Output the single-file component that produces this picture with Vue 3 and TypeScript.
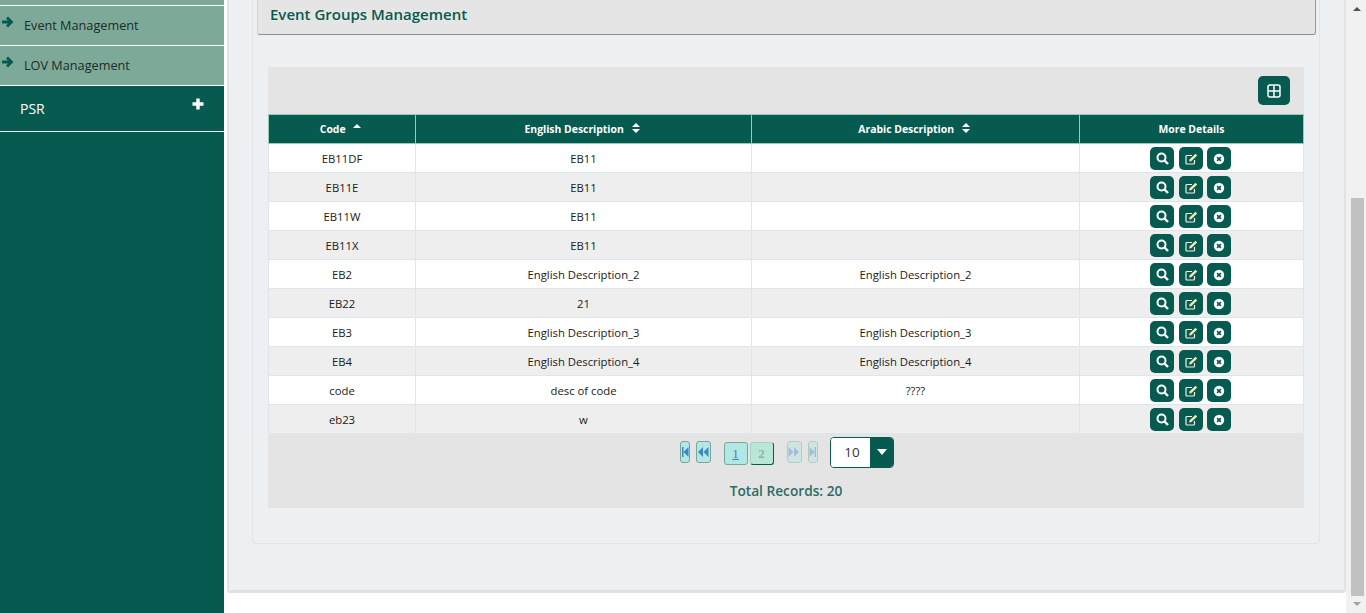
<template>
  <div class="page">
    <aside class="sidebar">
      <div class="menu-sliver"></div>
      <div v-for="item in subMenu" :key="item" class="sub-item">
        <svg class="arrow" viewBox="0 0 12 12" width="12" height="12">
          <path d="M0 6h9M5 1.500 9.500 6 5 10.500" fill="none" stroke="#075a50" stroke-width="2.800" />
        </svg>
        <span>{{ item }}</span>
      </div>
      <div class="psr-item">
        <span>PSR</span>
        <svg class="plus" viewBox="0 0 12 12" width="12" height="12">
          <path d="M6 .5v11M.5 6h11" stroke="#fff" stroke-width="3.4" fill="none" />
        </svg>
      </div>
    </aside>

    <main class="main">
      <div class="panel">
        <div class="card">
          <div class="panel-title">Event Groups Management</div>
          <div class="datatable">
            <div class="toolbar">
              <button class="btn add-btn" aria-label="Add">
                <svg viewBox="0 0 14 14" width="14" height="14">
                  <rect x="1" y="1" width="12" height="12" rx="2" fill="none" stroke="#fff" stroke-width="1.500" />
                  <path d="M7 1v12M1 7h12" stroke="#fff" stroke-width="1.500" />
                </svg>
              </button>
            </div>
            <table>
              <colgroup>
                <col style="width: 147px" />
                <col style="width: 336px" />
                <col style="width: 328px" />
                <col />
              </colgroup>
              <thead>
                <tr>
                  <th>
                    Code
                    <svg class="sort" viewBox="0 0 8 10" width="8" height="10">
                      <path d="M4 1 8 5H0z" fill="#fff" />
                    </svg>
                  </th>
                  <th>
                    English Description
                    <svg class="sort" viewBox="0 0 8 10" width="8" height="10">
                      <path d="M4 0 8 4H0zM4 10 0 6h8z" fill="#fff" />
                    </svg>
                  </th>
                  <th>
                    Arabic Description
                    <svg class="sort" viewBox="0 0 8 10" width="8" height="10">
                      <path d="M4 0 8 4H0zM4 10 0 6h8z" fill="#fff" />
                    </svg>
                  </th>
                  <th>More Details</th>
                </tr>
              </thead>
              <tbody>
                <tr v-for="row in rows" :key="row.code">
                  <td>{{ row.code }}</td>
                  <td>{{ row.english }}</td>
                  <td>{{ row.arabic }}</td>
                  <td>
                    <div class="actions">
                      <button class="btn icon-btn" aria-label="View">
                        <svg viewBox="0 0 13 13" width="13" height="13">
                          <circle cx="5.500" cy="5.500" r="4" fill="none" stroke="#fff" stroke-width="2" />
                          <path d="M8.500 8.500 12 12" stroke="#fff" stroke-width="2.400" />
                        </svg>
                      </button>
                      <button class="btn icon-btn" aria-label="Edit">
                        <svg viewBox="0 0 13 12" width="13" height="12">
                          <path d="M9.500 7v3a1 1 0 0 1-1 1H2a1 1 0 0 1-1-1V3.500a1 1 0 0 1 1-1h5" fill="none" stroke="#f1f1e6" stroke-width="1.200" />
                          <path d="M4.500 6.500 10.500 .8l1.700 1.700-6 5.800-2 .3z" fill="#f3e9b0" />
                        </svg>
                      </button>
                      <button class="btn icon-btn" aria-label="Delete">
                        <svg viewBox="0 0 12 12" width="12" height="12">
                          <circle cx="6" cy="6" r="5.200" fill="#fff" />
                          <path d="M4.100 4.100 7.900 7.900M7.900 4.100 4.100 7.900" stroke="#075a50" stroke-width="1.600" />
                        </svg>
                      </button>
                    </div>
                  </td>
                </tr>
              </tbody>
            </table>
            <div class="paginator">
              <div class="pager-row">
                <span class="pg first">
                  <svg viewBox="0 0 8 14" width="8" height="14"><path d="M1 2h1.500v10H1zM7.500 2v10L2.500 7z" fill="#3f86c4" /></svg>
                </span>
                <span class="pg prev">
                  <svg viewBox="0 0 12 14" width="12" height="14"><path d="M6 2v10L1 7zM11.500 2v10l-5-5z" fill="#3f86c4" /></svg>
                </span>
                <span class="pg-num current">1</span>
                <span class="pg-num other">2</span>
                <span class="pg next off">
                  <svg viewBox="0 0 12 14" width="12" height="14"><path d="M.5 2v10l5-5zM6 2v10l5-5z" fill="#3f86c4" /></svg>
                </span>
                <span class="pg last off">
                  <svg viewBox="0 0 8 14" width="8" height="14"><path d="M.5 2v10l5-5zM5.500 2H7v10H5.500z" fill="#3f86c4" /></svg>
                </span>
                <div class="page-size">
                  <span class="size-value">10</span>
                  <span class="size-caret"></span>
                </div>
              </div>
              <div class="total">Total Records: 20</div>
            </div>
          </div>
        </div>
      </div>
    </main>

    <div class="scrollbar">
      <span class="scroll-up"></span>
      <div class="thumb"></div>
      <span class="scroll-down"></span>
    </div>
  </div>
</template>

<script setup lang="ts">
interface EventGroup {
  code: string
  english: string
  arabic: string
}

const subMenu: string[] = ['Event Management', 'LOV Management']

const rows: EventGroup[] = [
  { code: 'EB11DF', english: 'EB11', arabic: '' },
  { code: 'EB11E', english: 'EB11', arabic: '' },
  { code: 'EB11W', english: 'EB11', arabic: '' },
  { code: 'EB11X', english: 'EB11', arabic: '' },
  { code: 'EB2', english: 'English Description_2', arabic: 'English Description_2' },
  { code: 'EB22', english: '21', arabic: '' },
  { code: 'EB3', english: 'English Description_3', arabic: 'English Description_3' },
  { code: 'EB4', english: 'English Description_4', arabic: 'English Description_4' },
  { code: 'code', english: 'desc of code', arabic: '????' },
  { code: 'eb23', english: 'w', arabic: '' }
]
</script>

<style>
html,
body {
  margin: 0;
  overflow: hidden;
  background: #fff;
}
</style>

<style scoped>
.page {
  display: flex;
  height: 613px;
  overflow: hidden;
  font-family: "Open Sans", sans-serif;
  font-size: 11.3px;
  color: #222;
}

.sidebar {
  flex: 0 0 224px;
  background: #075a50;
}

.menu-sliver {
  height: 5px;
  background: #7daa98;
  border-bottom: 1px solid #fff;
}

.sub-item {
  position: relative;
  display: flex;
  align-items: center;
  height: 37px;
  padding: 0 0 2px 24px;
  background: #7daa98;
  border-bottom: 1px solid #fff;
  font-size: 12.7px;
  color: #1d2b2a;
}

.arrow {
  position: absolute;
  left: 2px;
  top: 10px;
}

.psr-item {
  display: flex;
  align-items: center;
  justify-content: space-between;
  height: 45px;
  padding: 0 20px;
  border-bottom: 1px solid #fff;
  font-size: 14px;
  font-weight: 500;
  color: #fff;
}

.plus {
  margin-top: -9px;
}

.main {
  flex: 1;
  min-width: 0;
  padding-left: 3px;
}

.panel {
  height: 590px;
  padding: 0 26px 0 25px;
  background: #ecf0f3;
  border-left: 2px solid #e2e3e3;
  border-right: 2px solid #e2e3e3;
  border-bottom: 3px solid #e0e1e1;
  border-radius: 0 0 3px 3px;
}

.card {
  height: 544px;
  margin: 0 -2px;
  padding: 0 15px;
  box-sizing: border-box;
  border: 1px solid #e0e5e8;
  border-top: 0;
  border-radius: 0 0 4px 4px;
}

.panel-title {
  height: 35px;
  box-sizing: border-box;
  margin: 0 -12px 32px -11px;
  padding: 4px 12px 0;
  background: #e5e5e5;
  border-left: 1px solid #d4d4d4;
  border-right: 1px solid #9a9a9a;
  border-bottom: 1px solid #8f8f8f;
  border-radius: 0 0 3px 3px;
  font-size: 15px;
  font-weight: 600;
  color: #075a50;
}

.datatable {
  background: #e4e4e4;
}

.toolbar {
  display: flex;
  justify-content: flex-end;
  align-items: flex-start;
  height: 47px;
  padding: 9px 14px 0 0;
  box-sizing: border-box;
}

.btn {
  display: flex;
  align-items: center;
  justify-content: center;
  padding: 0;
  border: 0;
  background: #075a50;
}

.add-btn {
  width: 32px;
  height: 29px;
  border-radius: 5px;
}

table {
  width: 100%;
  border-collapse: collapse;
  table-layout: fixed;
}

th {
  height: 29px;
  box-sizing: border-box;
  padding: 0;
  background: #075a50;
  border: 1px solid #93cdb5;
  color: #fff;
  font-size: 10.4px;
  font-weight: 700;
  text-align: center;
}

.sort {
  margin-left: 5px;
  margin-right: 3px;
  vertical-align: 0;
}

td {
  height: 29px;
  box-sizing: border-box;
  padding: 0;
  border: 1px solid #dce6ee;
  color: #1a1a1a;
  text-align: center;
}

tbody tr:nth-child(odd) td {
  background: #fff;
}

tbody tr:nth-child(even) td {
  background: #eee;
}

.actions {
  display: flex;
  justify-content: center;
  gap: 4px;
  padding: 1px 2px 0 0;
}

.actions .btn:first-child {
  margin-right: 1px;
}

.icon-btn {
  width: 24px;
  height: 23px;
  border-radius: 5px;
}

.paginator {
  height: 74px;
  box-sizing: border-box;
  padding-top: 3px;
  text-align: center;
}

.pager-row {
  display: flex;
  justify-content: center;
  align-items: flex-start;
  height: 31px;
  padding-left: 1px;
}

.pg {
  display: flex;
  align-items: center;
  justify-content: center;
  height: 22px;
  margin-top: 4px;
  box-sizing: border-box;
  background: #b2e8e4;
  border: 1px solid #75a89a;
  border-radius: 3px;
}

.first,
.last {
  width: 10px;
}

.prev,
.next {
  width: 15px;
}

.first {
  margin-right: 6px;
}

.prev {
  margin-right: 13px;
}

.next {
  margin-right: 6px;
}

.last {
  margin-right: 12px;
}

.off {
  opacity: 0.4;
}

.pg-num {
  display: flex;
  align-items: center;
  justify-content: center;
  width: 24px;
  height: 23px;
  margin-top: 5px;
  box-sizing: border-box;
  border-radius: 3px;
  font-family: "Liberation Serif", serif;
  font-size: 13px;
}

.current {
  margin-right: 2px;
  background: #b2e8e4;
  border: 1px solid #75a89a;
  color: #3f7fb5;
  text-decoration: underline;
}

.other {
  margin-right: 13px;
  background: #b9e6d6;
  border: 1px solid #075a50;
  border-top-color: #a7d3c2;
  border-left-color: #a7d3c2;
  color: #8fb5a8;
  font-weight: 700;
}

.page-size {
  display: flex;
  width: 64px;
  height: 31px;
  box-sizing: border-box;
  border: 1px solid #075a50;
  border-radius: 4px;
  overflow: hidden;
}

.size-value {
  flex: 0 0 39px;
  box-sizing: border-box;
  padding-left: 4px;
  background: #fff;
  font-size: 13.5px;
  line-height: 29px;
  color: #333;
}

.size-caret {
  position: relative;
  flex: 1;
  background: #075a50;
}

.size-caret::after {
  content: "";
  position: absolute;
  left: 7px;
  top: 11px;
  border-left: 5px solid transparent;
  border-right: 5px solid transparent;
  border-top: 6px solid #fff;
}

.total {
  margin-top: 13px;
  font-size: 13.7px;
  font-weight: 600;
  color: #2e6b66;
}

.scrollbar {
  position: relative;
  flex: 0 0 20px;
  background: #f1f1f1;
}

.thumb {
  position: absolute;
  left: 5px;
  right: 2px;
  top: 198px;
  height: 398px;
  background: #c1c1c1;
}

.scroll-up {
  position: absolute;
  left: 7px;
  top: 7px;
  border-left: 4px solid transparent;
  border-right: 4px solid transparent;
  border-bottom: 4px solid #505050;
}

.scroll-down {
  position: absolute;
  left: 7px;
  bottom: 7px;
  border-left: 4px solid transparent;
  border-right: 4px solid transparent;
  border-top: 4px solid #a3a3a3;
}
</style>
